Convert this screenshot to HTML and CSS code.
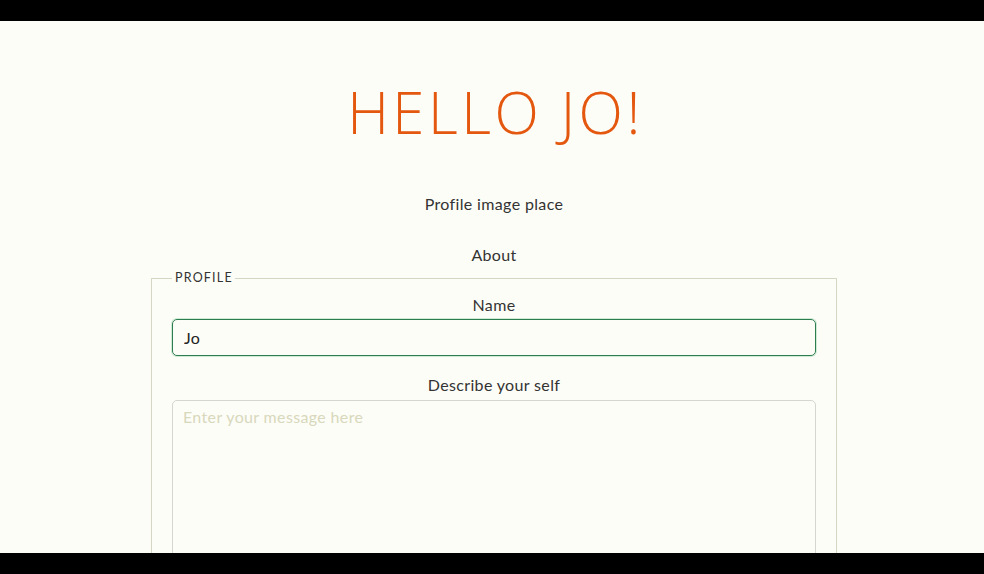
FILE: index.html
```html
<!DOCTYPE html>
<html lang="en">
<head>
  <meta charset="UTF-8" />
  <title>Hello Jo</title>
  <link rel="stylesheet" href="styles.css">
</head>
<body>

<div class="bar"></div>

<main class="page">
  <h1 class="greeting">HELLO JO!</h1>

  <!-- avatar goes here later -->
  <p class="line">Profile image place</p>
  <p class="line about">About</p>

  <fieldset class="profile">
    <legend>Profile</legend>
    <label class="field-label" for="name">Name</label>
    <input class="field name-field" id="name" type="text" value="Jo" autofocus />

    <label class="field-label bio-label" for="bio">Describe your self</label>
    <textarea class="field bio-field" id="bio" placeholder="Enter your message here"></textarea>
  </fieldset>
</main>

<div class="bar"></div>

</body>
</html>
```

FILE: styles.css
```css
html, body {
  margin: 0;
  height: 574px;
}

body {
  display: flex;
  flex-direction: column;
  overflow: hidden;
  background: #fdfdf7;
  color: #333;
  font-family: Lato, "Open Sans", sans-serif;
  font-size: 16px;
  letter-spacing: 0.35px;
}

.bar {
  height: 21px;
  flex: none;
  background: #000;
}

.page {
  flex: 1;
  min-height: 0;
  overflow: hidden;
  padding-left: 4px;
  text-align: center;
}

.greeting {
  margin: 51px 0 0;
  padding-left: 3px;
  height: 80px;
  line-height: 80px;
  font-family: "Open Sans", sans-serif;
  font-weight: 300;
  font-size: 58px;
  letter-spacing: 3.5px;
  color: #e4570e;
}

.line {
  margin: 40px 0 0;
  line-height: 24px;
}

.about {
  margin-top: 27px;
}

.profile {
  width: 644px;
  margin: 3px auto 0;
  padding: 7px 20px 20px;
  border: 1px solid #d6d6c4;
  text-align: left;
}

.profile legend {
  padding: 0 2px 0 3px;
  line-height: 16px;
  font-size: 12.5px;
  letter-spacing: 1.2px;
  text-transform: uppercase;
  color: #333;
}

.field-label {
  display: block;
  text-align: center;
  line-height: 24px;
}

.field {
  display: block;
  box-sizing: border-box;
  width: 644px;
  font-family: Lato, "Open Sans", sans-serif;
  font-size: 16px;
  letter-spacing: 0.35px;
  color: #222;
  background: transparent;
  border-radius: 5px;
}

.name-field {
  height: 37px;
  margin-top: 2px;
  padding: 0 10px 0 11px;
  border: 1px solid #2e7d4f;
  box-shadow: 0 0 0 1px rgba(120, 200, 150, 0.35);
  outline: none;
}

.bio-label {
  margin-top: 17px;
}

.bio-field {
  height: 200px;
  margin-top: 3px;
  padding: 6px 10px;
  border: 1px solid #d6d6d0;
  resize: none;
}

.bio-field::placeholder {
  color: #d8d8bc;
}
```
